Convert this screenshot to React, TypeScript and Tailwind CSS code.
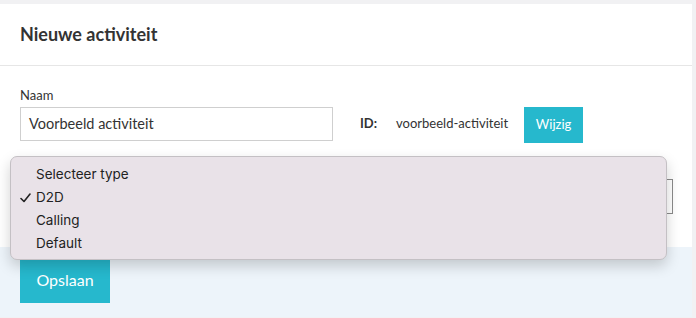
import React from "react";

const types = ["Selecteer type", "D2D", "Calling", "Default"];

export default function App() {
  return (
    <div
      className="relative h-[318px] w-[696px] overflow-hidden bg-[#f1f1f3] pt-[4px]"
      style={{ fontFamily: "Lato, 'Liberation Sans', sans-serif" }}
    >
      <div className="w-[692px] bg-white">
        <div className="flex h-[62px] items-center border-b border-[#e6e6e6] px-5">
          <h1 className="text-[18px] font-bold text-[#333]">Nieuwe activiteit</h1>
        </div>

        <div className="h-[181px] px-5 pt-[21px]">
          <label className="block text-[13px] leading-[16px] text-[#333]">Naam</label>
          <div className="mt-[2px] flex items-center">
            <div className="flex h-[34px] w-[313px] items-center border border-[#cfcfcf] px-[8px] text-[14.5px] text-[#333]">
              Voorbeeld activiteit
            </div>
            <span className="ml-[27px] text-[13px] font-bold text-[#333]">ID:</span>
            <span className="ml-[19px] text-[13px] text-[#333]">voorbeeld-activiteit</span>
            <button className="ml-[16px] mt-[2px] flex h-[36px] w-[59px] items-center justify-center bg-[#26b8cd] text-[13px] text-white">
              Wijzig
            </button>
          </div>
          <div className="mt-[36px] h-[35px] w-[653px] border border-[#8a8a8a] bg-white" />
        </div>

        <div className="h-[70px] bg-[#edf4fa] px-5 pt-[10px]">
          <button className="flex h-[46px] w-[90px] items-center justify-center bg-[#26b8cd] text-[16px] text-white">
            Opslaan
          </button>
        </div>
      </div>

      <div
        className="absolute left-[10px] top-[156px] w-[657px] rounded-[7px] border border-[#c4c0c4] bg-[#e9e2e8] pb-[4px] pt-[6px] shadow-[0_6px_14px_rgba(0,0,0,0.18)]"
        style={{ fontFamily: "Inter, 'Noto Sans', sans-serif" }}
      >
        {types.map((t, i) => (
          <div key={t} className="relative flex h-[23px] items-center pl-[25px] text-[13.5px] text-[#222]">
            {i === 1 && (
              <svg className="absolute left-[9px] top-[7px]" width="11" height="10" viewBox="0 0 11 10">
                <path d="M1 5.5 L4 8.5 L10 1" fill="none" stroke="#222" strokeWidth="1.6" strokeLinecap="round" strokeLinejoin="round" />
              </svg>
            )}
            {t}
          </div>
        ))}
      </div>
    </div>
  );
}
